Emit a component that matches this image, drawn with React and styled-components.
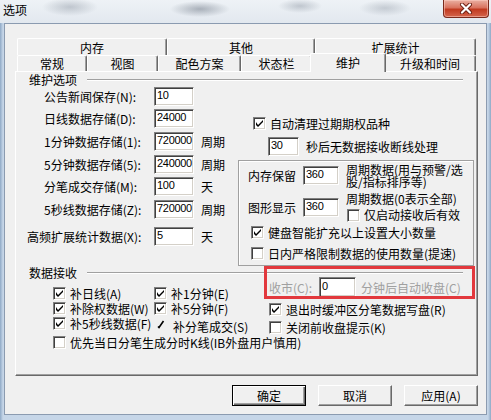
import React from 'react';
import styled, { createGlobalStyle, css } from 'styled-components';

const GlobalStyle = createGlobalStyle`
  html, body {
    margin: 0;
    padding: 0;
    background: #fff;
  }
  body {
    font-family: "Noto Sans CJK SC", "Noto Sans", sans-serif;
    font-size: 12px;
    color: #000;
  }
`;

const Window = styled.div`
  width: 491px;
  height: 420px;
  box-sizing: border-box;
  display: flex;
  flex-direction: column;
  background: linear-gradient(90deg, #8fa9c6 0, #c6d6e8 3px, #c6d6e8 488px, #8fa9c6 491px);
  overflow: hidden;
`;

const TitleBar = styled.div`
  height: 23px;
  flex: none;
  display: flex;
  justify-content: space-between;
  align-items: flex-start;
  padding-left: 3px;
  background:
    radial-gradient(ellipse 28px 9px at 70px 7px, rgba(110, 120, 135, .35), transparent),
    radial-gradient(ellipse 30px 8px at 200px 9px, rgba(90, 100, 115, .45), transparent),
    radial-gradient(ellipse 22px 7px at 300px 6px, rgba(110, 120, 135, .35), transparent),
    radial-gradient(ellipse 26px 8px at 385px 8px, rgba(110, 120, 135, .3), transparent),
    linear-gradient(#eef2f6, #e2e8ef);
`;

const Title = styled.div`
  line-height: 20px;
  font-size: 12px;
`;

const CloseButton = styled.div`
  width: 46px;
  height: 18px;
  margin-right: 2px;
  box-sizing: border-box;
  border: 1px solid #7a2a1c;
  border-top: none;
  border-radius: 0 0 4px 4px;
  background: linear-gradient(#eab0a2 0%, #d9735f 45%, #c13a20 55%, #d4654c 100%);
  box-shadow: inset 0 0 0 1px rgba(255, 210, 200, .5);
  display: flex;
  align-items: center;
  justify-content: center;
`;

const ClientArea = styled.div`
  margin: 0 4px;
  height: 392px;
  box-sizing: border-box;
  background: #f0f0f0;
  border: 1px solid #8b9bb0;
  padding: 14px 0 0 10px;
`;

const TabStrip = styled.div`
  margin-left: 2px;
  width: 459px;
`;

const TabRow = styled.div`
  display: flex;
  height: ${p => p.$h}px;
`;

const Tab = styled.div`
  box-sizing: border-box;
  flex: none;
  width: ${p => p.$w}px;
  border-top: 1px solid #fff;
  border-left: 1px solid #fff;
  border-right: 1px solid #696969;
  box-shadow: inset -1px 0 #a0a0a0;
  border-radius: 2px 2px 0 0;
  background: #f0f0f0;
  display: flex;
  align-items: center;
  justify-content: center;
  line-height: 14px;
  padding-top: ${p => p.$pt || 0}px;
  white-space: nowrap;
  ${p => p.$selected && css`
    width: ${p.$w + 4}px;
    height: 19px;
    margin: -2px -2px -1px;
    position: relative;
    z-index: 1;
    padding-bottom: 1px;
  `}
`;

const Panel = styled.div`
  position: relative;
  width: 463px;
  height: 305px;
  box-sizing: border-box;
  border: 1px solid;
  border-color: #fff #696969 #696969 #fff;
  box-shadow: inset -1px -1px #a0a0a0;
`;

const GroupHeader = styled.div`
  display: flex;
  align-items: center;
  height: 14px;
  margin-top: ${p => p.$mt || 0}px;
  padding: 0 14px 0 13px;
`;

const GroupLabel = styled.span`
  line-height: 14px;
  white-space: nowrap;
`;

const GroupLine = styled.span`
  flex: 1;
  height: 0;
  margin-left: 10px;
  border-top: 1px solid #a0a0a0;
  border-bottom: 1px solid #fff;
`;

const Body = styled.div`
  display: flex;
  align-items: flex-start;
`;

const LeftCol = styled.div`
  width: 222px;
  flex: none;
`;

const RightCol = styled.div`
  width: 239px;
  flex: none;
`;

const FieldRow = styled.div`
  display: flex;
  align-items: center;
  height: ${p => p.$h || 19}px;
  margin-top: ${p => p.$mt || 0}px;
  padding-left: ${p => p.$pl || 0}px;
  white-space: nowrap;
  color: ${p => (p.$disabled ? '#a0a0a0' : '#000')};
`;

const FieldLabel = styled.span`
  box-sizing: border-box;
  width: ${p => p.$w}px;
  padding-left: ${p => p.$indent || 0}px;
  flex: none;
  white-space: nowrap;
`;

const Edit = styled.div`
  box-sizing: border-box;
  flex: none;
  width: ${p => p.$w}px;
  height: ${p => p.$h || 19}px;
  margin-top: ${p => p.$mt || 0}px;
  background: #fff;
  border: 1px solid;
  border-color: #808080 #fff #fff #808080;
  box-shadow: inset 1px 1px #404040, inset -1px -1px #d4d0c8;
  padding-left: 2px;
  font-family: "Liberation Sans", "Noto Sans", sans-serif;
  font-size: 11px;
  letter-spacing: -0.3px;
  line-height: ${p => (p.$h || 19) - 4}px;
  color: #000;
  overflow: hidden;
  white-space: nowrap;
`;

const Unit = styled.span`
  margin-left: ${p => p.$ml || 7}px;
  white-space: nowrap;
`;

const CheckRow = styled.div`
  display: flex;
  align-items: center;
  gap: 4px;
  height: ${p => p.$h || 14}px;
  margin-top: ${p => p.$mt || 0}px;
  padding-left: ${p => p.$pl || 0}px;
  white-space: nowrap;
`;

const Box = styled.span`
  flex: none;
  box-sizing: border-box;
  width: 13px;
  height: 13px;
  background: #fff;
  border: 1px solid;
  border-color: #808080 #fff #fff #808080;
  box-shadow: inset 1px 1px #404040, inset -1px -1px #d4d0c8;
  display: flex;
  align-items: center;
  justify-content: center;
`;

const MemoryBox = styled.div`
  margin-top: 4px;
  width: 236px;
  height: 106px;
  box-sizing: border-box;
  border: 1px solid #a0a0a0;
  box-shadow: inset 1px 1px #fff;
`;

const MemRow = styled.div`
  display: flex;
  align-items: flex-start;
  margin-top: ${p => p.$mt}px;
`;

const MemLabel = styled.span`
  box-sizing: border-box;
  width: 64px;
  padding-left: 9px;
  height: 19px;
  line-height: 19px;
  margin-top: ${p => p.$mt}px;
  flex: none;
  white-space: nowrap;
`;

const MemNote = styled.div`
  margin-left: 7px;
  line-height: 12px;
  white-space: nowrap;
`;

const Bottom = styled.div`
  display: flex;
  align-items: flex-start;
  margin-top: -3px;
`;

const BottomLeft = styled.div`
  width: 248px;
  flex: none;
  box-sizing: border-box;
  padding: 9px 0 0 37px;
  display: grid;
  grid-template-columns: 101px auto;
  grid-auto-rows: 15px;
`;

const BottomRight = styled.div`
  display: flex;
  flex-direction: column;
  padding-left: 5px;
`;

const HalfHidden = styled.div`
  display: flex;
  align-items: flex-start;
  white-space: nowrap;
`;

const HalfHiddenText = styled.span`
  margin: 4px 0 0 6px;
  line-height: 14px;
`;

const Highlight = styled.div`
  position: absolute;
  left: 248px;
  top: 194px;
  width: 211px;
  height: 33px;
  box-sizing: border-box;
  border: 3px solid #e2383d;
  pointer-events: none;
`;

const ButtonRow = styled.div`
  width: 463px;
  margin-top: 9px;
  display: flex;
  justify-content: flex-end;
  gap: 12px;
`;

const Button = styled.div`
  box-sizing: border-box;
  width: 74px;
  height: 21px;
  display: flex;
  align-items: center;
  justify-content: center;
  background: #f0f0f0;
  border: 1px solid;
  border-color: #fff #696969 #696969 #fff;
  box-shadow: inset -1px -1px #a0a0a0;
  white-space: nowrap;
  ${p => p.$default && css`
    border-color: #000;
    box-shadow: inset 1px 1px #fff, inset -1px -1px #696969, inset -2px -2px #a0a0a0;
  `}
`;

const Tick = () => (
  <svg width="7" height="7" viewBox="0 0 7 7">
    <path d="M0 2v3l2 2 5-5V0L2 5z" fill="#000" />
  </svg>
);

const Check = ({ checked, children, ...rest }) => (
  <CheckRow {...rest}>
    <Box>{checked && <Tick />}</Box>
    {children}
  </CheckRow>
);

const storageRows = [
  { label: '公告新闻保存(N):', value: '10', mt: 0, indent: 28 },
  { label: '日线数据存储(D):', value: '24000', mt: 3, indent: 28 },
  { label: '1分钟数据存储(1):', value: '720000', mt: 4, indent: 28, unit: '周期' },
  { label: '5分钟数据存储(5):', value: '240000', mt: 4, indent: 28, unit: '周期' },
  { label: '分笔成交存储(M):', value: '100', mt: 3, indent: 28, unit: '天' },
  { label: '5秒线数据存储(Z):', value: '720000', mt: 4, indent: 28, unit: '周期' },
  { label: '高频扩展统计数据(X):', value: '5', mt: 8, indent: 11, unit: '天' },
];

const backTabs = [
  { name: '内存', w: 150 },
  { name: '其他', w: 148 },
  { name: '扩展统计', w: 161 },
];

const frontTabs = [
  { name: '常规', w: 70 },
  { name: '视图', w: 71 },
  { name: '配色方案', w: 83 },
  { name: '状态栏', w: 71 },
  { name: '维护', w: 72, selected: true },
  { name: '升级和时间', w: 92 },
];

export default function App() {
  return (
    <>
      <GlobalStyle />
      <Window>
        <TitleBar>
          <Title>选项</Title>
          <CloseButton>
            <svg width="14" height="11" viewBox="0 0 14 11">
              <path d="M3 1.5l8 8M11 1.5l-8 8" stroke="#6b1f12" strokeWidth="4" strokeLinecap="round" />
              <path d="M3 1.5l8 8M11 1.5l-8 8" stroke="#fff" strokeWidth="2.2" strokeLinecap="round" />
            </svg>
          </CloseButton>
        </TitleBar>

        <ClientArea>
          <TabStrip>
            <TabRow $h={17}>
              {backTabs.map(t => (
                <Tab key={t.name} $w={t.w} $pt={2}>{t.name}</Tab>
              ))}
            </TabRow>
            <TabRow $h={16}>
              {frontTabs.map(t => (
                <Tab key={t.name} $w={t.w} $selected={t.selected}>{t.name}</Tab>
              ))}
            </TabRow>
          </TabStrip>

          <Panel>
            <GroupHeader $mt={1}>
              <GroupLabel>维护选项</GroupLabel>
              <GroupLine />
            </GroupHeader>

            <Body>
              <LeftCol>
                {storageRows.map(r => (
                  <FieldRow key={r.label} $mt={r.mt}>
                    <FieldLabel $w={138} $indent={r.indent}>{r.label}</FieldLabel>
                    <Edit $w={40}>{r.value}</Edit>
                    {r.unit && <Unit>{r.unit}</Unit>}
                  </FieldRow>
                ))}
              </LeftCol>

              <RightCol>
                <Check checked $mt={29} $pl={15}>自动清理过期期权品种</Check>
                <FieldRow $mt={7} $pl={30}>
                  <Edit $w={31}>30</Edit>
                  <Unit>秒后无数据接收断线处理</Unit>
                </FieldRow>

                <MemoryBox>
                  <MemRow $mt={3}>
                    <MemLabel $mt={2}>内存保留</MemLabel>
                    <Edit $w={36} $mt={2}>360</Edit>
                    <MemNote>
                      周期数据(用与预警/选<br />股/指标排序等)
                    </MemNote>
                  </MemRow>
                  <MemRow $mt={5}>
                    <MemLabel $mt={5}>图形显示</MemLabel>
                    <Edit $w={36} $mt={5}>360</Edit>
                    <MemNote>
                      周期数据(0表示全部)
                      <Check $mt={3} $pl={1}>仅启动接收后有效</Check>
                    </MemNote>
                  </MemRow>
                  <Check checked $mt={3} $pl={12}>健盘智能扩充以上设置大小数量</Check>
                  <Check $mt={7} $pl={12}>日内严格限制数据的使用数量(提速)</Check>
                </MemoryBox>
              </RightCol>
            </Body>

            <GroupHeader>
              <GroupLabel>数据接收</GroupLabel>
              <GroupLine />
            </GroupHeader>

            <Bottom>
              <BottomLeft>
                <Check checked $h={15}>补日线(A)</Check>
                <Check checked $h={15}>补1分钟(E)</Check>
                <Check checked $h={15}>补除权数据(W)</Check>
                <Check checked $h={15}>补5分钟(F)</Check>
                <Check checked $h={15}>补5秒线数据(F)</Check>
                <HalfHidden>
                  <svg width="13" height="15" viewBox="0 0 13 15">
                    <path d="M9.5 5L5 11.5 4 10.5" stroke="#000" strokeWidth="1.6" fill="none" />
                  </svg>
                  <HalfHiddenText>补分笔成交(S)</HalfHiddenText>
                </HalfHidden>
              </BottomLeft>

              <BottomRight>
                <FieldRow $h={20} $disabled>
                  <FieldLabel $w={50}>收市(C):</FieldLabel>
                  <Edit $w={37} $h={20}>0</Edit>
                  <Unit $ml={5}>分钟后自动收盘(C)</Unit>
                </FieldRow>
                <Check checked $mt={5}>退出时缓冲区分笔数据写盘(R)</Check>
                <Check $mt={4}>关闭前收盘提示(K)</Check>
              </BottomRight>
            </Bottom>

            <Check $mt={1} $pl={37}>优先当日分笔生成分时K线(IB外盘用户慎用)</Check>

            <Highlight />
          </Panel>

          <ButtonRow>
            <Button $default>确定</Button>
            <Button>取消</Button>
            <Button>应用(A)</Button>
          </ButtonRow>
        </ClientArea>
      </Window>
    </>
  );
}
